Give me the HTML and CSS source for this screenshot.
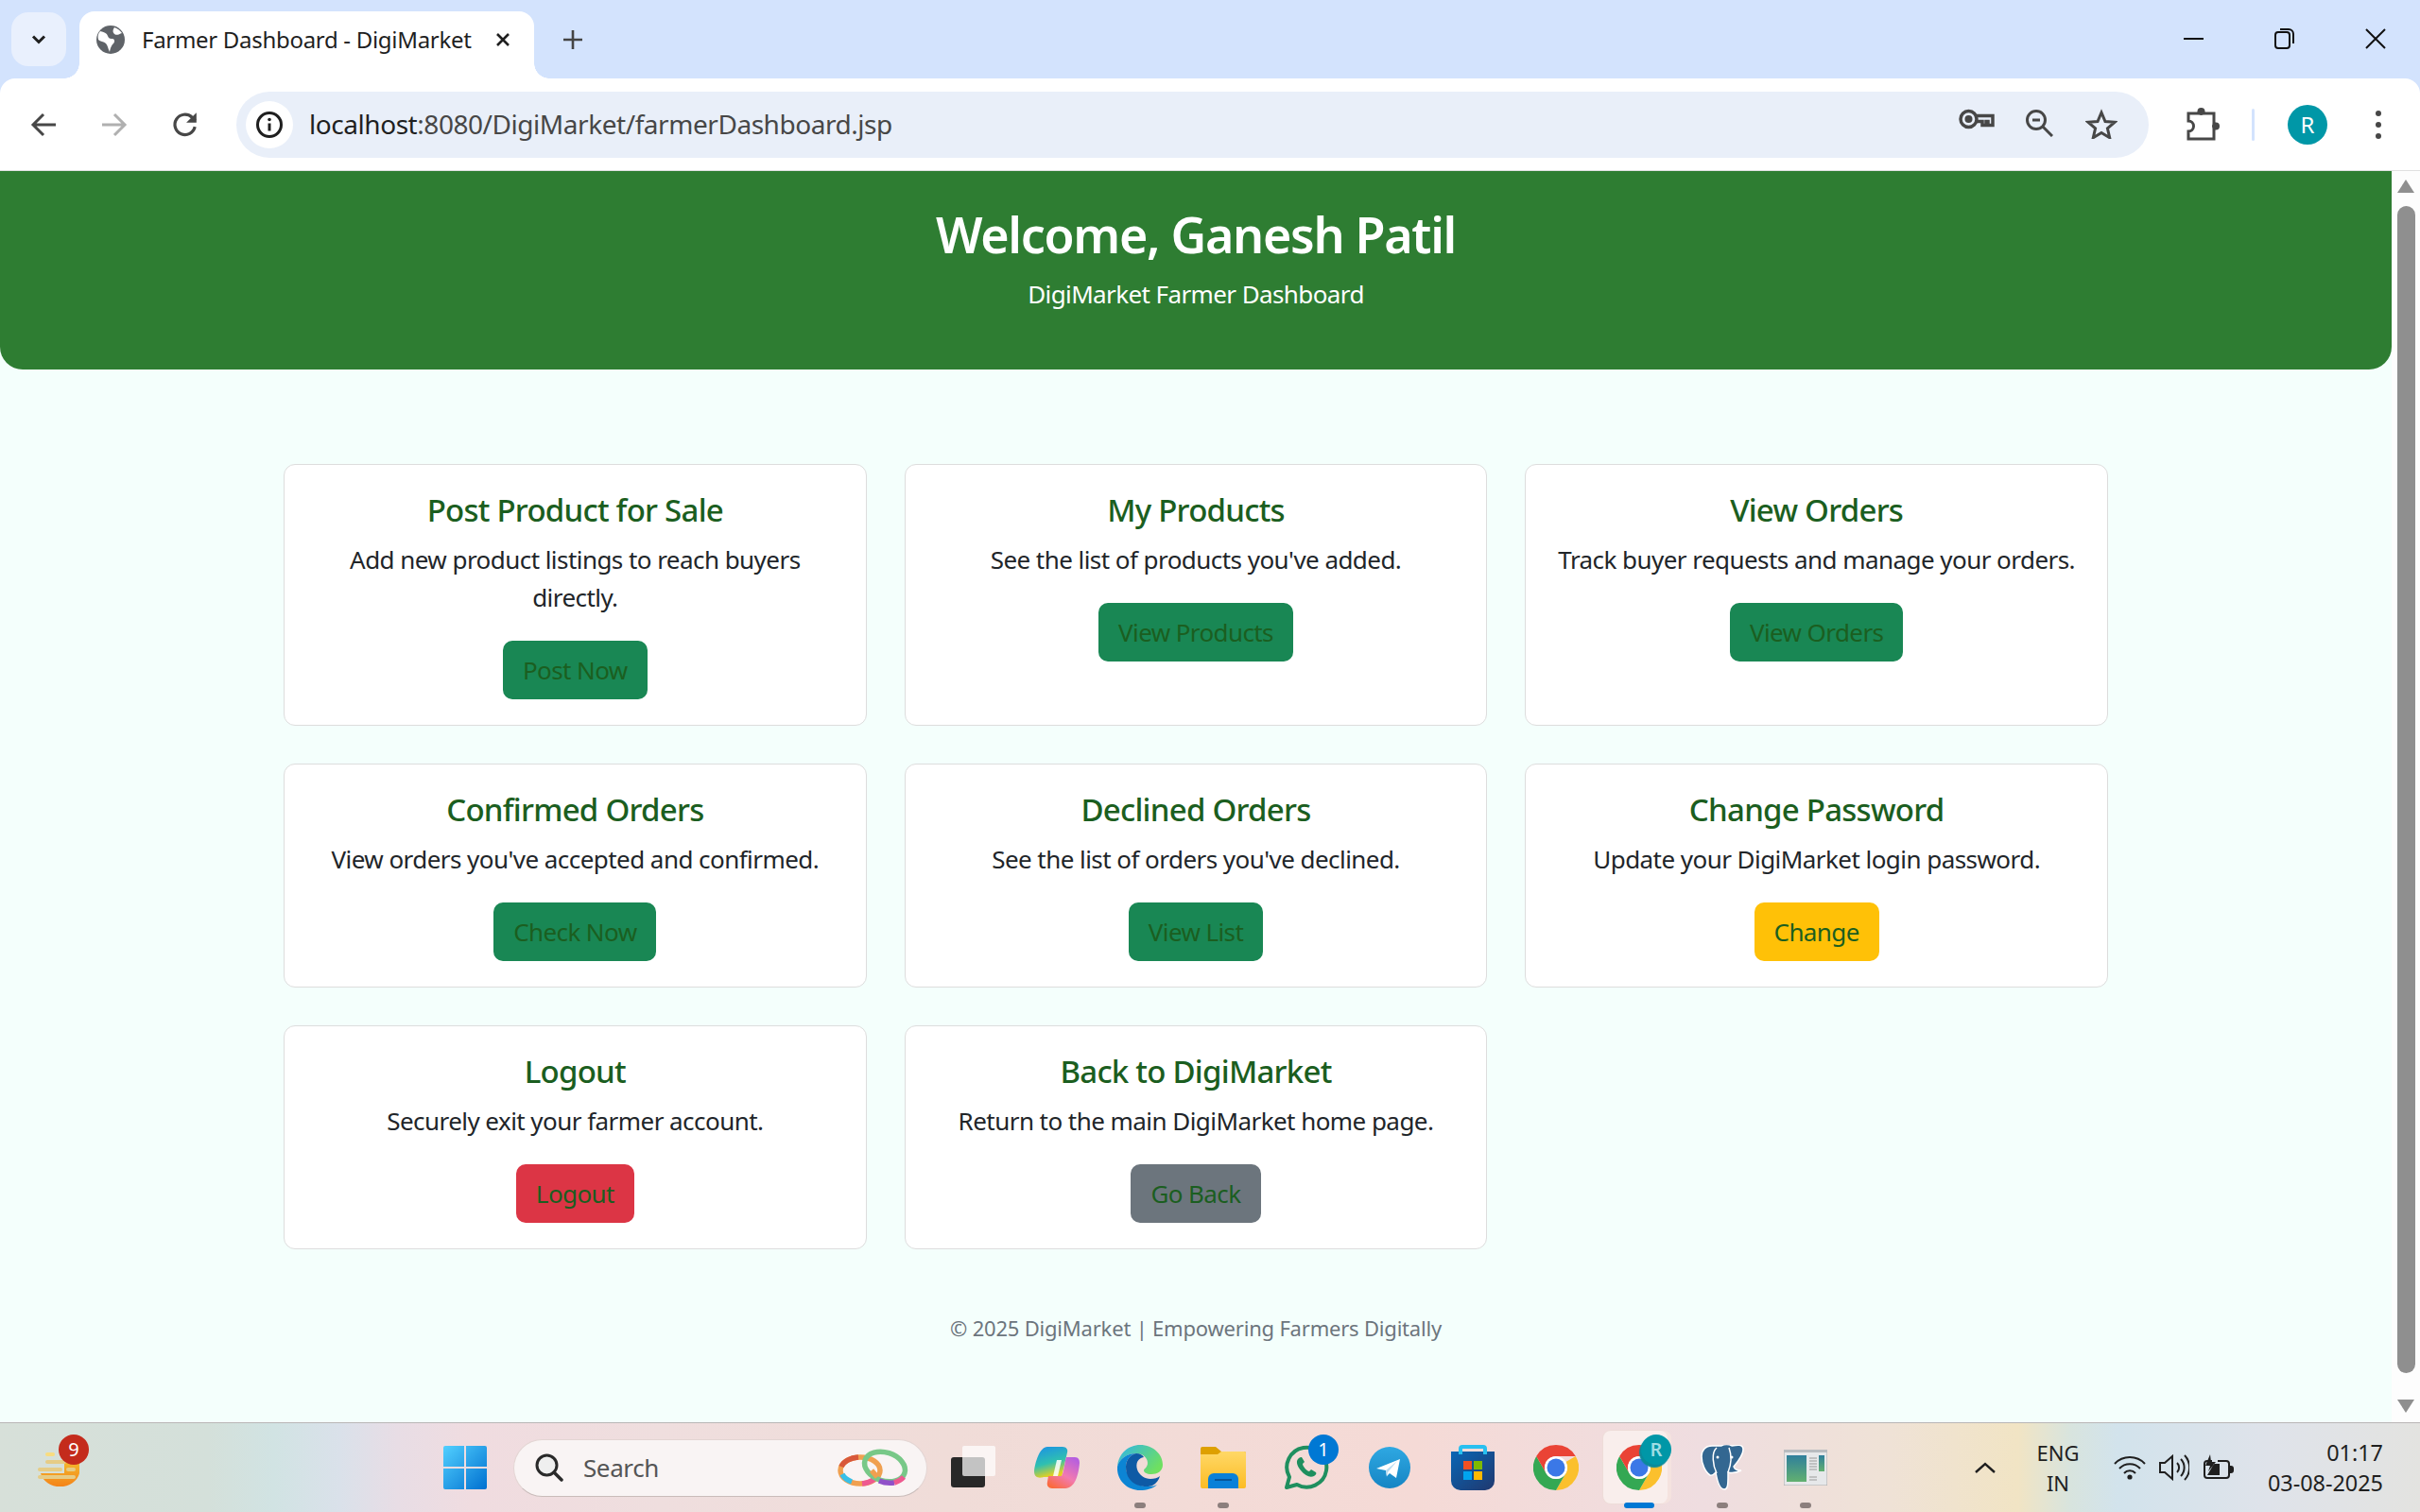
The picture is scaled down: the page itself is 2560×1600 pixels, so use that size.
FILE: index.html
```html
<!DOCTYPE html>
<html lang="en">

<head>
    <meta charset="UTF-8">
    <meta name="viewport" content="width=device-width, initial-scale=1.0">
    <title>Farmer Dashboard - DigiMarket</title>
    <link rel="stylesheet" href="styles.css">
</head>

<body>
    <svg class="defs" width="0" height="0">
        <defs>
            <symbol id="chrome" viewBox="0 0 48 48">
                <path fill="#fbc02d" d="M44.8 12A24 24 0 0 1 24 48l10.4-18a12 12 0 0 0 0-12z" />
                <path fill="#34a853" d="M3.2 12A24 24 0 0 0 24 48l10.4-18a12 12 0 0 1-20.8 0z" />
                <path fill="#ea4335" d="M24 0a24 24 0 0 1 20.8 12H24a12 12 0 0 0-10.4 18L3.2 12A24 24 0 0 1 24 0z" />
                <circle cx="24" cy="24" r="12" fill="#fff" />
                <circle cx="24" cy="24" r="9.5" fill="#3b78e7" />
            </symbol>
            <linearGradient id="gWin" x1="0" y1="0" x2="1" y2="1">
                <stop offset="0" stop-color="#52d0ff" />
                <stop offset="1" stop-color="#0070d0" />
            </linearGradient>
            <linearGradient id="gEdgeTop" x1="0" y1="0" x2="1" y2="0.6">
                <stop offset="0" stop-color="#2fb4ea" />
                <stop offset="1" stop-color="#6fe060" />
            </linearGradient>
            <linearGradient id="gFolder" x1="0" y1="0" x2="0" y2="1">
                <stop offset="0" stop-color="#ffd867" />
                <stop offset="1" stop-color="#fcbc24" />
            </linearGradient>
            <linearGradient id="gTelegram" x1="0" y1="0" x2="0" y2="1">
                <stop offset="0" stop-color="#2fa8e2" />
                <stop offset="1" stop-color="#1585c4" />
            </linearGradient>
            <linearGradient id="gStore" x1="0" y1="0" x2="1" y2="1">
                <stop offset="0" stop-color="#0a66b5" />
                <stop offset="1" stop-color="#20386e" />
            </linearGradient>
            <linearGradient id="gCopilotA" x1="0" y1="0" x2="0.3" y2="1">
                <stop offset="0" stop-color="#1b8fe8" />
                <stop offset="0.6" stop-color="#2fc0b0" />
                <stop offset="1" stop-color="#e6d020" />
            </linearGradient>
            <linearGradient id="gCopilotB" x1="0.8" y1="0" x2="0.2" y2="1">
                <stop offset="0" stop-color="#b45ee0" />
                <stop offset="0.55" stop-color="#f27ab0" />
                <stop offset="1" stop-color="#fb6a3a" />
            </linearGradient>
            <linearGradient id="gTray" x1="0" y1="0" x2="0" y2="1">
                <stop offset="0" stop-color="#f3c030" />
                <stop offset="1" stop-color="#f48318" />
            </linearGradient>
            <linearGradient id="gAppPane" x1="0" y1="0" x2="0" y2="1">
                <stop offset="0" stop-color="#2f7f9c" />
                <stop offset="1" stop-color="#62b070" />
            </linearGradient>
        </defs>
    </svg>

    <div class="tabstrip">
        <div class="tab-search">
            <svg width="18" height="12" viewBox="0 0 18 12"><path d="M3 2.5l6 6 6-6" fill="none" stroke="#1f1f1f" stroke-width="3" /></svg>
        </div>
        <div class="tab">
            <svg class="favicon" width="30" height="30" viewBox="0 0 30 30">
                <circle cx="15" cy="15" r="15" fill="#5f6368" />
                <path fill="#fff" d="M4 6c4 1 7 2 8 5s3 3 5 3 3 3 1 5-3 4-4 9c-2-4-2-7-4-9s-6-2-8-4c-1-4 0-7 2-9zM19 2c3 1 6 3 8 6-3 1-5 3-8 1-2-2-2-4 0-7z" />
            </svg>
            <span class="tab-title">Farmer Dashboard - DigiMarket</span>
            <svg class="tab-close" width="16" height="16" viewBox="0 0 16 16"><path d="M2 2l12 12M14 2L2 14" stroke="#1f1f1f" stroke-width="2.6" /></svg>
        </div>
        <svg class="new-tab" width="22" height="22" viewBox="0 0 22 22"><path d="M11 1v20M1 11h20" stroke="#444" stroke-width="2.6" /></svg>
        <div class="window-controls">
            <svg width="22" height="22" viewBox="0 0 22 22"><path d="M0 11h21" stroke="#111" stroke-width="2" /></svg>
            <svg width="22" height="22" viewBox="0 0 22 22">
                <rect x="1" y="4" width="15" height="17" rx="3" fill="none" stroke="#111" stroke-width="2" />
                <path d="M6 1h9a5 5 0 0 1 5 5v10" fill="none" stroke="#111" stroke-width="2" />
            </svg>
            <svg width="22" height="22" viewBox="0 0 22 22"><path d="M1 1l20 20M21 1L1 21" stroke="#111" stroke-width="2" /></svg>
        </div>
    </div>

    <div class="toolbar">
        <div class="nav-btn">
            <svg width="28" height="26" viewBox="0 0 28 26"><path d="M27 13H3M14 2L3 13l11 11" fill="none" stroke="#474747" stroke-width="3" /></svg>
        </div>
        <div class="nav-btn">
            <svg width="28" height="26" viewBox="0 0 28 26"><path d="M1 13h24M14 2l11 11-11 11" fill="none" stroke="#b0b0b0" stroke-width="3" /></svg>
        </div>
        <div class="nav-btn">
            <svg width="30" height="30" viewBox="0 0 28 28">
                <path d="M23.5 16a10 10 0 1 1-3-9.5L24 10" fill="none" stroke="#474747" stroke-width="3" />
                <path d="M25 2v10H15z" fill="#474747" />
            </svg>
        </div>
        <div class="omnibox">
            <div class="site-info">
                <svg width="30" height="30" viewBox="0 0 30 30">
                    <circle cx="15" cy="15" r="12.5" fill="none" stroke="#1f1f1f" stroke-width="3" />
                    <path d="M15 13.5v8" stroke="#1f1f1f" stroke-width="3" />
                    <circle cx="15" cy="9.5" r="1.8" fill="#1f1f1f" />
                </svg>
            </div>
            <span class="url"><span class="url-host">localhost</span>:8080/DigiMarket/farmerDashboard.jsp</span>
            <div class="omni-actions">
                <div class="omni-btn">
                    <svg width="38" height="22" viewBox="0 0 38 22">
                        <circle cx="10.5" cy="11" r="8.5" fill="none" stroke="#474747" stroke-width="3.5" />
                        <circle cx="10.5" cy="11" r="4" fill="#474747" />
                        <path d="M19 7.5h17v10h-5v-4h-2v4h-4v-4h-6" fill="none" stroke="#474747" stroke-width="3.5" />
                    </svg>
                </div>
                <div class="omni-btn">
                    <svg width="30" height="30" viewBox="0 0 30 30">
                        <circle cx="12" cy="12" r="9.5" fill="none" stroke="#474747" stroke-width="3" />
                        <path d="M8 12h8M19 19l10 10" stroke="#474747" stroke-width="3" />
                    </svg>
                </div>
                <div class="omni-btn">
                    <svg class="star" width="34" height="32" viewBox="0 0 34 32">
                        <path d="M17 4l4 9.5 10 .8-7.6 6.6 2.3 9.8L17 25.500l-8.700 5.200 2.300-9.800L3 14.300l10-.8z" fill="none" stroke="#474747" stroke-width="3" />
                    </svg>
                </div>
            </div>
        </div>
        <div class="toolbar-right">
            <svg class="ext-icon" width="36" height="36" viewBox="0 0 36 36">
                <path d="M3 6h10a4 4 0 0 1 7 0h10v10a4 4 0 0 1 0 7v10H3v-8a5 5 0 0 0 0-11z" fill="none" stroke="#474747" stroke-width="3" />
                <circle cx="16.500" cy="4" r="4" fill="#474747" />
                <circle cx="32" cy="19.500" r="4" fill="#474747" />
            </svg>
            <span class="toolbar-divider"></span>
            <span class="avatar">R</span>
            <svg class="menu-dots" width="10" height="32" viewBox="0 0 10 32">
                <circle cx="5" cy="4" r="3" fill="#474747" />
                <circle cx="5" cy="16" r="3" fill="#474747" />
                <circle cx="5" cy="28" r="3" fill="#474747" />
            </svg>
        </div>
    </div>

    <div class="viewport">
        <div class="page">
            <header class="banner">
                <h1>Welcome, Ganesh Patil</h1>
                <p>DigiMarket Farmer Dashboard</p>
            </header>

            <main class="card-grid">
                <section class="card">
                    <h5>Post Product for Sale</h5>
                    <p>Add new product listings to reach buyers directly.</p>
                    <a class="btn btn-success">Post Now</a>
                </section>
                <section class="card">
                    <h5>My Products</h5>
                    <p>See the list of products you've added.</p>
                    <a class="btn btn-success">View Products</a>
                </section>
                <section class="card">
                    <h5>View Orders</h5>
                    <p>Track buyer requests and manage your orders.</p>
                    <a class="btn btn-success">View Orders</a>
                </section>
                <section class="card">
                    <h5>Confirmed Orders</h5>
                    <p>View orders you've accepted and confirmed.</p>
                    <a class="btn btn-success">Check Now</a>
                </section>
                <section class="card">
                    <h5>Declined Orders</h5>
                    <p>See the list of orders you've declined.</p>
                    <a class="btn btn-success">View List</a>
                </section>
                <section class="card">
                    <h5>Change Password</h5>
                    <p>Update your DigiMarket login password.</p>
                    <a class="btn btn-warning">Change</a>
                </section>
                <section class="card">
                    <h5>Logout</h5>
                    <p>Securely exit your farmer account.</p>
                    <a class="btn btn-danger">Logout</a>
                </section>
                <section class="card">
                    <h5>Back to DigiMarket</h5>
                    <p>Return to the main DigiMarket home page.</p>
                    <a class="btn btn-secondary">Go Back</a>
                </section>
            </main>

            <footer class="page-footer">© 2025 DigiMarket | Empowering Farmers Digitally</footer>
        </div>

        <div class="scrollbar">
            <span class="arrow-up"></span>
            <span class="thumb"></span>
            <span class="arrow-down"></span>
        </div>
    </div>

    <div class="taskbar">
        <div class="tray-left">
            <svg width="46" height="40" viewBox="0 0 46 40">
                <path fill="url(#gTray)" d="M3 22h41a21 18 0 0 1-41 0zM28 6h16v16H28z" />
                <g fill="#e6cc86">
                    <rect x="8" y="0" width="10" height="4" rx="2" fill="#f8dc80" />
                    <rect x="8" y="8" width="22" height="4" rx="2" />
                    <rect x="0" y="16" width="26" height="4" rx="2" />
                    <rect x="30" y="16" width="10" height="4" rx="2" />
                    <rect x="0" y="24" width="40" height="4" rx="2" />
                </g>
            </svg>
            <span class="badge badge-red">9</span>
        </div>

        <div class="task-slot">
            <svg width="46" height="46" viewBox="0 0 46 46">
                <path fill="url(#gWin)" d="M2 0h20v22H0V2a2 2 0 0 1 2-2zM24 0h20a2 2 0 0 1 2 2v20H24zM0 24h22v22H2a2 2 0 0 1-2-2zM24 24h22v20a2 2 0 0 1-2 2H24z" />
            </svg>
        </div>

        <div class="search-box">
            <svg width="30" height="30" viewBox="0 0 30 30">
                <circle cx="12.500" cy="12.500" r="10.500" fill="#efefef" stroke="#2a2a2a" stroke-width="3" />
                <path d="M20 20l8 8" stroke="#2a2a2a" stroke-width="3.500" stroke-linecap="round" />
            </svg>
            <span class="search-text">Search</span>
            <svg class="rings" width="76" height="42" viewBox="0 0 76 42">
                <g fill="none" stroke-width="5.500">
                    <ellipse cx="24" cy="24" rx="21" ry="14" stroke="#f0a050" />
                    <path d="M5 28a21 14 0 0 0 10 8" stroke="#38c0e8" />
                    <path d="M26 38a21 14 0 0 0 14-6" stroke="#ee5a90" />
                    <path d="M4 20a21 14 0 0 1 18-10" stroke="#d8583a" />
                    <ellipse cx="50" cy="20" rx="22" ry="15" transform="rotate(18 50 20)" stroke="#78c888" />
                    <path d="M44 35a22 15 0 0 0 16 2" stroke="#9050c8" />
                    <path d="M60 37a22 15 0 0 0 10-6" stroke="#ee5a90" />
                    <path d="M36 24l6 7" stroke="#f0a050" />
                </g>
            </svg>
        </div>

        <div class="task-icons">
            <div class="task-slot">
                <svg width="48" height="46" viewBox="0 0 48 46">
                    <rect x="0" y="12" width="36" height="32" rx="3" fill="#282828" />
                    <rect x="12" y="0" width="35" height="32" rx="2" fill="#fff" fill-opacity="0.72" />
                </svg>
            </div>
            <div class="task-slot">
                <svg width="48" height="44" viewBox="0 0 48 44">
                    <path fill="url(#gCopilotA)" d="M14 0h16c4 0 6 3 5 6l-6 26H10c-3 1-10 2-10-6C1 16 6 0 14 0z" />
                    <path fill="url(#gCopilotB)" d="M34 11h9c4 0 5 3 5 6-1 13-5 27-15 27H19c-4 0-6-3-5-7l1-6h14c3-6 3-14 5-20z" />
                    <path fill="#fff" fill-opacity="0.85" d="M24 14h5l-4 17h-5z" />
                </svg>
            </div>
            <div class="task-slot">
                <svg width="48" height="48" viewBox="0 0 48 48">
                    <path fill="url(#gEdgeTop)" d="M0 23C1 9 12 0 24 0c14 0 24 10 24 21 0 7-6 10-12 10-5 0-8-2-8-4s4-3 4-8c0-6-6-10-12-10C10 9 2 15 0 23z" />
                    <path fill="#0c85d4" d="M0 23C2 15 10 9 20 9c-6 1-11 7-11 14 0 13 13 22 25 21 3 0 6-1 8-2-4 4-11 6-18 6C10 48-1 37 0 23z" />
                    <path fill="#0e5aa5" d="M9 23c0-7 5-13 11-14 4 0 7 2 8 4-6 1-9 6-7 13 2 6 8 10 14 10 4 0 8-1 10-3-1 4-4 8-8 10C30 46 9 44 9 23z" />
                </svg>
                <span class="run-dot"></span>
            </div>
            <div class="task-slot">
                <svg width="48" height="44" viewBox="0 0 48 44">
                    <path fill="#dea000" d="M2 0h14l6 5h24a2 2 0 0 1 2 2v6H0V2a2 2 0 0 1 2-2z" />
                    <path fill="url(#gFolder)" d="M0 8h18l4-3h24a2 2 0 0 1 2 2v35a2 2 0 0 1-2 2H2a2 2 0 0 1-2-2z" />
                    <path fill="#0a80d8" d="M8 44V34a6 6 0 0 1 6-6h20a6 6 0 0 1 6 6v10z" />
                    <path d="M15 35h18" stroke="#07569a" stroke-width="2" />
                </svg>
                <span class="run-dot"></span>
            </div>
            <div class="task-slot">
                <svg width="48" height="48" viewBox="0 0 48 48">
                    <path d="M3 45l3-11A21 21 0 1 1 14 42z" fill="none" stroke="#1f8f5f" stroke-width="4" stroke-linejoin="round" />
                    <path d="M16 14c-3 2-3 7 2 13s10 8 14 6c2-1 3-3 2-4l-5-3-2 2c-2 0-7-5-7-8l2-2-3-5c-1 0-2 0-3 1z" fill="#1f8f5f" />
                </svg>
                <span class="badge badge-blue">1</span>
            </div>
            <div class="task-slot">
                <svg width="44" height="44" viewBox="0 0 44 44">
                    <circle cx="22" cy="22" r="22" fill="url(#gTelegram)" />
                    <path fill="#fff" d="M8 23l25-10-4 20-7-5-3 3-1-6z" />
                    <path fill="#b8dcf0" d="M18 25l12-10-10 12-1 5z" />
                </svg>
            </div>
            <div class="task-slot">
                <svg width="46" height="48" viewBox="0 0 46 48">
                    <path fill="url(#gStore)" d="M0 7h46v31a10 10 0 0 1-10 10H10A10 10 0 0 1 0 38z" />
                    <path d="M10 10V4a2 2 0 0 1 2-2h22a2 2 0 0 1 2 2v6" fill="none" stroke="#28c0f0" stroke-width="4" />
                    <rect x="13" y="17" width="9" height="9" fill="#f25022" />
                    <rect x="24" y="17" width="9" height="9" fill="#7fba00" />
                    <rect x="13" y="28" width="9" height="9" fill="#00a4ef" />
                    <rect x="24" y="28" width="9" height="9" fill="#ffb900" />
                </svg>
            </div>
            <div class="task-slot">
                <svg width="48" height="48"><use href="#chrome" /></svg>
            </div>
            <div class="task-slot task-active">
                <svg width="48" height="48"><use href="#chrome" /></svg>
                <span class="badge badge-teal">R</span>
                <span class="run-bar"></span>
            </div>
            <div class="task-slot">
                <svg width="46" height="48" viewBox="0 0 46 48">
                    <path fill="#336791" stroke="#fff" stroke-width="1.500" d="M12 1C5 1 1 6 1 12c0 8 4 17 9 20 3 1 4-1 6-3 1 6 3 18 9 18 4 0 4-6 4-14 0-2 0-3 0-4 4 1 10 0 14-2-4 0-7-1-8-4 5-6 10-13 10-18 0-6-6-5-12-4-3-2-8-2-11 0C20 1 16 1 12 1z" />
                    <path d="M17 3C11 8 13 22 17 30M30 3c3 8 3 16-1 26" fill="none" stroke="#fff" stroke-width="1.500" />
                    <circle cx="18" cy="13" r="1.500" fill="#fff" />
                    <circle cx="33" cy="13" r="1.500" fill="#fff" />
                </svg>
                <span class="run-dot"></span>
            </div>
            <div class="task-slot">
                <svg width="46" height="38" viewBox="0 0 46 38">
                    <rect x="0" y="0" width="46" height="38" fill="#e6e8ea" stroke="#a8a8a8" />
                    <rect x="0" y="0" width="46" height="3" fill="#b8bcc0" />
                    <rect x="3" y="6" width="21" height="28" fill="url(#gAppPane)" />
                    <path d="M27 9h8M27 12h8M27 15h8M27 18h8M27 21h8M27 29h8M27 32h8" stroke="#9a9a9a" stroke-width="1.200" />
                    <rect x="37" y="6" width="6" height="17" fill="url(#gAppPane)" />
                </svg>
                <span class="run-dot"></span>
            </div>
        </div>

        <svg class="tray-chevron" width="24" height="14" viewBox="0 0 24 14"><path d="M2 12L12 3l10 9" fill="none" stroke="#1f1f1f" stroke-width="2.400" /></svg>
        <div class="lang">ENG<br>IN</div>
        <div class="tray-icons">
            <svg width="34" height="26" viewBox="0 0 34 26">
                <g fill="none" stroke="#1f1f1f" stroke-width="2">
                    <path d="M1 9a22 22 0 0 1 32 0" />
                    <path d="M6 14a15 15 0 0 1 22 0" />
                    <path d="M11 19a8 8 0 0 1 12 0" />
                </g>
                <circle cx="17" cy="23" r="2.600" fill="#1f1f1f" />
            </svg>
            <svg width="32" height="28" viewBox="0 0 32 28">
                <g fill="none" stroke="#1f1f1f" stroke-width="2">
                    <path d="M1 9h5l8-7v24l-8-7H1z" />
                    <path d="M19 9a7 7 0 0 1 0 10" />
                    <path d="M23 5a13 13 0 0 1 0 18" />
                    <path d="M27 1a19 19 0 0 1 0 26" />
                </g>
            </svg>
            <svg width="34" height="28" viewBox="0 0 34 28">
                <path d="M10 7H5a3 3 0 0 0-3 3v12a3 3 0 0 0 3 3h20a3 3 0 0 0 3-3V10a3 3 0 0 0-3-3H16" fill="none" stroke="#1f1f1f" stroke-width="2" />
                <path d="M8 0L3 12h5l-2 6 8-10H9z M5 22l7-12h6v12z" fill="#1f1f1f" />
                <path d="M28 12h2a3 3 0 0 1 3 3v2a3 3 0 0 1-3 3h-2z" fill="#1f1f1f" />
            </svg>
        </div>
        <div class="clock">01:17<br>03-08-2025</div>
    </div>
</body>

</html>
```
FILE: styles.css
```css
html,
body {
    margin: 0;
    height: 100%;
}

body {
    font-family: "Noto Sans", "Open Sans", sans-serif;
    background-color: #d3e3fd;
    display: flex;
    flex-direction: column;
    overflow: hidden;
}

.defs {
    position: absolute;
}

/* browser chrome */
.tabstrip {
    height: 83px;
    flex: none;
    display: flex;
    align-items: flex-start;
}

.tab-search {
    width: 58px;
    height: 57px;
    margin: 13px 0 0 12px;
    border-radius: 18px;
    background-color: #e9f0fd;
    display: flex;
    align-items: center;
    justify-content: center;
}

.tab {
    position: relative;
    width: 481px;
    height: 71px;
    margin: 12px 0 0 14px;
    padding: 0 0 12px 18px;
    box-sizing: border-box;
    background-color: #fff;
    border-radius: 16px 16px 0 0;
    display: flex;
    align-items: center;
}

.tab::before,
.tab::after {
    content: "";
    position: absolute;
    bottom: 0;
    width: 16px;
    height: 16px;
}

.tab::before {
    left: -16px;
    background: radial-gradient(circle at 0 0, transparent 15.5px, #fff 16px);
}

.tab::after {
    right: -16px;
    background: radial-gradient(circle at 100% 0, transparent 15.5px, #fff 16px);
}

.tab-title {
    margin-left: 18px;
    font-size: 24px;
    letter-spacing: -0.3px;
    color: #1f1f1f;
    white-space: nowrap;
}

.tab-close {
    margin-left: auto;
    margin-right: 25px;
}

.new-tab {
    margin: 31px 0 0 30px;
}

.window-controls {
    margin: 30px 36px 0 auto;
    display: flex;
    gap: 74px;
}

.toolbar {
    height: 97px;
    flex: none;
    background-color: #fff;
    border-radius: 16px 16px 0 0;
    border-bottom: 1px solid #e0e0e0;
    padding-left: 8px;
    display: flex;
    align-items: center;
}

.nav-btn {
    width: 75px;
    display: flex;
    justify-content: center;
}

.omnibox {
    width: 2023px;
    height: 70px;
    margin-left: 17px;
    border-radius: 35px;
    background-color: #e9eff9;
    display: flex;
    align-items: center;
}

.site-info {
    width: 50px;
    height: 50px;
    margin-left: 10px;
    border-radius: 50%;
    background-color: #fff;
    display: flex;
    align-items: center;
    justify-content: center;
}

.url {
    margin-left: 17px;
    padding-bottom: 2px;
    font-size: 28px;
    letter-spacing: -0.45px;
    color: #474747;
    white-space: nowrap;
}

.url-host {
    color: #1f1f1f;
}

.omni-actions {
    margin-left: auto;
    padding-right: 17px;
    display: flex;
}

.omni-btn {
    width: 66px;
    display: flex;
    justify-content: center;
}

.star {
    margin-bottom: 2px;
}

.toolbar-right {
    flex: 1;
    display: flex;
    align-items: center;
}

.ext-icon {
    margin-left: 39px;
}

.toolbar-divider {
    width: 3px;
    height: 34px;
    margin-left: 34px;
    border-radius: 2px;
    background-color: #d3e3fd;
}

.avatar {
    width: 42px;
    height: 42px;
    margin-left: 35px;
    border-radius: 50%;
    background-color: #0097a7;
    color: #fff;
    font-size: 24px;
    display: flex;
    align-items: center;
    justify-content: center;
}

.menu-dots {
    margin-left: 49px;
}

/* page */
.viewport {
    flex: 1;
    min-height: 0;
    display: flex;
    background-color: #fdfdfd;
}

.page {
    flex: 1;
    min-width: 0;
    background-color: #f4fffc;
}

.banner {
    height: 210px;
    box-sizing: border-box;
    padding-top: 28px;
    background-color: #2e7d32;
    border-radius: 0 0 24px 24px;
    color: #fff;
    text-align: center;
}

.banner h1 {
    margin: 0;
    font-size: 52px;
    line-height: 78px;
    font-weight: 600;
    letter-spacing: -1.3px;
}

.banner p {
    margin: 4px 0 0;
    font-size: 26px;
    line-height: 40px;
    letter-spacing: -0.6px;
}

.card-grid {
    width: 1930px;
    margin: 100px auto 0;
    display: grid;
    grid-template-columns: repeat(3, 1fr);
    gap: 40px;
    text-align: center;
}

.card {
    padding: 28px 28px 27px;
    background-color: #fff;
    border: 1px solid #ddd;
    border-radius: 12px;
}

.card h5 {
    margin: 0 0 12px;
    font-size: 33px;
    line-height: 40px;
    font-weight: 500;
    letter-spacing: -0.75px;
    color: #1b5e20;
}

.card p {
    margin: 0 0 26px;
    font-size: 26px;
    line-height: 40px;
    letter-spacing: -0.55px;
    color: #212529;
}

.btn {
    display: inline-block;
    height: 62px;
    padding: 0 21px;
    border-radius: 10px;
    font-size: 26px;
    line-height: 62px;
    letter-spacing: -0.6px;
    color: #1b5e20;
}

.btn-success {
    background-color: #198754;
}

.btn-warning {
    background-color: #ffc107;
}

.btn-danger {
    background-color: #dc3545;
}

.btn-secondary {
    background-color: #6c757d;
}

.page-footer {
    margin-top: 65px;
    font-size: 22px;
    line-height: 36px;
    letter-spacing: -0.2px;
    color: #6c757d;
    text-align: center;
}

.scrollbar {
    width: 30px;
    flex: none;
    position: relative;
}

.thumb {
    position: absolute;
    top: 37px;
    left: 6px;
    width: 19px;
    height: 1235px;
    border-radius: 10px;
    background-color: #8f8f8f;
}

.arrow-up,
.arrow-down {
    position: absolute;
    left: 6px;
    width: 0;
    height: 0;
    border-left: 9.5px solid transparent;
    border-right: 9.5px solid transparent;
}

.arrow-up {
    top: 9px;
    border-bottom: 14px solid #8f8f8f;
}

.arrow-down {
    top: 1300px;
    border-top: 14px solid #8f8f8f;
}

/* taskbar */
.taskbar {
    height: 95px;
    flex: none;
    box-sizing: border-box;
    border-top: 1px solid #b9b6b6;
    display: flex;
    align-items: center;
    color: #1f1f1f;
    background: linear-gradient(90deg, #d7e0d9 0, #d4e0da 220px, #d1e3e3 290px, #dae1ea 360px, #e8dde5 420px, #f0dce0 500px, #efdede 700px, #f0dcd8 1000px, #f5dad6 1500px, #efdde0 1800px, #efe2d6 2000px, #f1e4c4 2135px, #d8e4de 2190px, #d2e3ec 2240px, #dfe3ea 2400px, #e3e3e0 2560px);
}

.tray-left {
    position: relative;
    width: 408px;
    padding-left: 40px;
    display: flex;
    align-items: center;
    padding-top: 8px;
}

.task-slot {
    position: relative;
    width: 88px;
    height: 94px;
    flex: none;
    display: flex;
    align-items: center;
    justify-content: center;
}

.task-icons {
    margin-left: 5px;
    display: flex;
}

.search-box {
    width: 438px;
    height: 61px;
    margin-left: 7px;
    box-sizing: border-box;
    padding-left: 22px;
    border-radius: 31px;
    background-color: #f9f4f4;
    border: 1px solid #e3d5d3;
    border-bottom-color: #c9bcba;
    display: flex;
    align-items: center;
}

.search-text {
    margin-left: 21px;
    font-size: 26px;
    letter-spacing: -0.4px;
    color: #555;
}

.rings {
    margin-left: auto;
    margin-right: 18px;
}

.badge {
    position: absolute;
    width: 32px;
    height: 32px;
    border-radius: 50%;
    color: #fff;
    font-size: 20px;
    line-height: 32px;
    text-align: center;
}

.badge-red {
    left: 62px;
    top: -11px;
    background-color: #c42b1c;
}

.badge-blue {
    left: 46px;
    top: 12px;
    background-color: #0078d4;
}

.badge-teal {
    left: 46px;
    top: 12px;
    background-color: #0097a7;
    box-shadow: -2px 3px 1px #0a8a9a;
    font-weight: 600;
    color: #9fdde4;
}

.task-active::before {
    content: "";
    position: absolute;
    left: 6px;
    top: 8px;
    width: 68px;
    height: 77px;
    border-radius: 8px;
    background-color: #f9eeec;
    box-shadow: 4px 0 0 #f5e3df, 0 0 0 1px #eedcd8;
}

.task-active svg,
.task-active .badge {
    z-index: 1;
}

.run-dot,
.run-bar {
    position: absolute;
    left: 38px;
    bottom: 4px;
    width: 12px;
    height: 6px;
    border-radius: 3px;
    background-color: #8c7f7d;
}

.run-bar {
    left: 28px;
    width: 32px;
    background-color: #0078d4;
    z-index: 1;
}

.tray-chevron {
    margin-left: 134px;
}

.lang {
    width: 80px;
    margin-left: 25px;
    font-size: 22px;
    line-height: 32px;
    text-align: center;
}

.tray-icons {
    margin-left: 19px;
    display: flex;
    align-items: center;
    gap: 14px;
}

.clock {
    margin-left: auto;
    padding-right: 39px;
    font-size: 23.4px;
    line-height: 32px;
    text-align: right;
}
```
